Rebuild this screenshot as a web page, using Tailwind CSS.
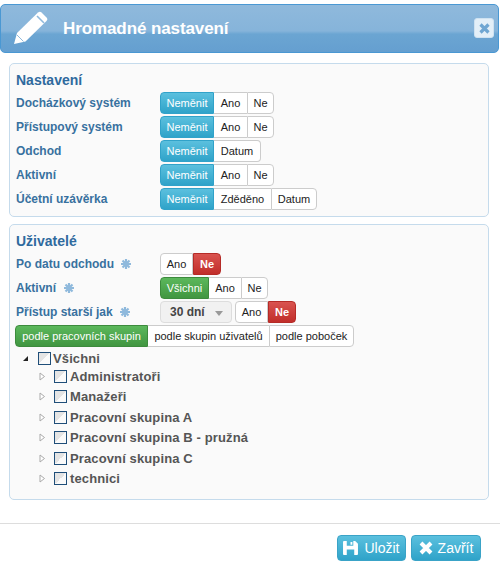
<!DOCTYPE html>
<html lang="en">
<head>
    <meta charset="UTF-8">
    <script src="https://cdn.jsdelivr.net/npm/@tailwindcss/browser@4"></script>
    <title>Hromadné nastavení</title>
</head>
<body class="bg-white font-['Liberation_Sans',Arial,sans-serif]">
<div class="w-[500px] h-[576px] overflow-hidden flex flex-col pt-[4px]">
    <!-- header -->
    <div class="relative h-[49px] w-[499px] shrink-0 flex items-center rounded-[5px] border border-[#4a98d3] bg-[linear-gradient(180deg,#8fb9dc_0%,#86b4da_55%,#6ba5d2_62%,#659fd0_100%)]">
        <svg class="absolute left-[12px] top-[6px]" width="36" height="34" viewBox="0 0 36 34"><path fill="#fff" d="M1 33 L4 22 L25 1.500 Q27 0 28.500 1.500 L34 7 Q35 8.500 33.500 10 L12.500 30.500 Z"/><path stroke="#8fb9dc" stroke-width="1.600" d="M24 5 L31 12"/><path stroke="#8fb9dc" stroke-width="1" d="M4 24 L10.500 30.500"/></svg>
        <h1 class="ml-[62px] text-[17px] font-bold tracking-[-0.1px] text-white leading-none">Hromadné nastavení</h1>
        <div class="absolute right-[4px] top-[13px] w-[20px] h-[20px] rounded-[3px] border border-[#cfe2f1] bg-[#e3eff8] flex items-center justify-center">
            <svg width="11" height="11" viewBox="0 0 11 11"><path stroke="#6fa6d2" stroke-width="3.200" d="M1.500 1.500 L9.500 9.500 M9.500 1.500 L1.500 9.500"/></svg>
        </div>
    </div>

    <div class="flex flex-col gap-[7px] pl-[9px] pt-[10px] w-[489px] shrink-0">
        <!-- Nastaveni -->
        <section class="h-[154px] rounded-[5px] border border-[#c5dbec] bg-[#fafafa] pl-[6px] pt-[7px]">
            <h2 class="text-[14px] font-bold leading-[18px] text-[#2f6a9e]">Nastavení</h2>
            <div class="mt-[3px] flex flex-col gap-[2px]">
                <div class="flex items-center h-[22px]">
                    <span class="w-[144px] text-[12px] font-bold text-[#38719f]">Docházkový systém</span>
                    <div class="flex text-[11px] h-[22px] leading-[20px]">
                        <span class="w-[54px] text-center rounded-l-[4px] text-white border border-[#31a2c9] bg-[linear-gradient(180deg,#5bc0de,#2fa3c9)]">Neměnit</span>
                        <span class="w-[33px] text-center text-[#222] border-y border-[#ccc] bg-white">Ano</span>
                        <span class="w-[27px] text-center rounded-r-[4px] text-[#222] border border-[#ccc] bg-white">Ne</span>
                    </div>
                </div>
                <div class="flex items-center h-[22px]">
                    <span class="w-[144px] text-[12px] font-bold text-[#38719f]">Přístupový systém</span>
                    <div class="flex text-[11px] h-[22px] leading-[20px]">
                        <span class="w-[54px] text-center rounded-l-[4px] text-white border border-[#31a2c9] bg-[linear-gradient(180deg,#5bc0de,#2fa3c9)]">Neměnit</span>
                        <span class="w-[33px] text-center text-[#222] border-y border-[#ccc] bg-white">Ano</span>
                        <span class="w-[27px] text-center rounded-r-[4px] text-[#222] border border-[#ccc] bg-white">Ne</span>
                    </div>
                </div>
                <div class="flex items-center h-[22px]">
                    <span class="w-[144px] text-[12px] font-bold text-[#38719f]">Odchod</span>
                    <div class="flex text-[11px] h-[22px] leading-[20px]">
                        <span class="w-[54px] text-center rounded-l-[4px] text-white border border-[#31a2c9] bg-[linear-gradient(180deg,#5bc0de,#2fa3c9)]">Neměnit</span>
                        <span class="w-[47px] text-center rounded-r-[4px] text-[#222] border border-l-0 border-[#ccc] bg-white">Datum</span>
                    </div>
                </div>
                <div class="flex items-center h-[22px]">
                    <span class="w-[144px] text-[12px] font-bold text-[#38719f]">Aktivní</span>
                    <div class="flex text-[11px] h-[22px] leading-[20px]">
                        <span class="w-[54px] text-center rounded-l-[4px] text-white border border-[#31a2c9] bg-[linear-gradient(180deg,#5bc0de,#2fa3c9)]">Neměnit</span>
                        <span class="w-[33px] text-center text-[#222] border-y border-[#ccc] bg-white">Ano</span>
                        <span class="w-[27px] text-center rounded-r-[4px] text-[#222] border border-[#ccc] bg-white">Ne</span>
                    </div>
                </div>
                <div class="flex items-center h-[22px]">
                    <span class="w-[144px] text-[12px] font-bold text-[#38719f]">Účetní uzávěrka</span>
                    <div class="flex text-[11px] h-[22px] leading-[20px]">
                        <span class="w-[54px] text-center rounded-l-[4px] text-white border border-[#31a2c9] bg-[linear-gradient(180deg,#5bc0de,#2fa3c9)]">Neměnit</span>
                        <span class="w-[57px] text-center text-[#222] border-y border-[#ccc] bg-white">Zděděno</span>
                        <span class="w-[46px] text-center rounded-r-[4px] text-[#222] border border-[#ccc] bg-white">Datum</span>
                    </div>
                </div>
            </div>
        </section>

        <!-- Uzivatele -->
        <section class="h-[276px] rounded-[5px] border border-[#c5dbec] bg-[#fafafa] pl-[5px] pt-[7px]">
            <h2 class="ml-[1px] text-[14px] font-bold leading-[18px] text-[#2f6a9e]">Uživatelé</h2>
            <div class="mt-[3px] flex flex-col gap-[2px]">
                <div class="flex items-center h-[22px] pl-[1px]">
                    <span class="w-[144px] flex items-center text-[12px] font-bold text-[#38719f]">Po datu odchodu<svg class="ml-[7px]" width="10" height="10" viewBox="0 0 10 10"><path stroke="#8fb9dc" stroke-width="2.200" d="M5 0 V10 M0 5 H10 M1.500 1.500 L8.500 8.500 M8.500 1.500 L1.500 8.500"/></svg></span>
                    <div class="flex text-[11px] h-[22px] leading-[20px]">
                        <span class="w-[33px] text-center rounded-l-[4px] text-[#222] border border-[#ccc] bg-white">Ano</span>
                        <span class="w-[28px] text-center rounded-r-[4px] font-bold text-white border border-[#b52b27] bg-[linear-gradient(180deg,#d9534f,#c12e2a)]">Ne</span>
                    </div>
                </div>
                <div class="flex items-center h-[22px] pl-[1px]">
                    <span class="w-[144px] flex items-center text-[12px] font-bold text-[#38719f]">Aktivní<svg class="ml-[8px]" width="10" height="10" viewBox="0 0 10 10"><path stroke="#8fb9dc" stroke-width="2.200" d="M5 0 V10 M0 5 H10 M1.500 1.500 L8.500 8.500 M8.500 1.500 L1.500 8.500"/></svg></span>
                    <div class="flex text-[11px] h-[22px] leading-[20px]">
                        <span class="w-[49px] text-center rounded-l-[4px] text-white border border-[#3d8b3d] bg-[linear-gradient(180deg,#5cb85c,#419641)]">Všichni</span>
                        <span class="w-[32px] text-center text-[#222] border-y border-[#ccc] bg-white">Ano</span>
                        <span class="w-[27px] text-center rounded-r-[4px] text-[#222] border border-[#ccc] bg-white">Ne</span>
                    </div>
                </div>
                <div class="flex items-center h-[22px] pl-[1px]">
                    <span class="w-[144px] flex items-center text-[12px] font-bold text-[#38719f]">Přístup starší jak<svg class="ml-[7px]" width="10" height="10" viewBox="0 0 10 10"><path stroke="#8fb9dc" stroke-width="2.200" d="M5 0 V10 M0 5 H10 M1.500 1.500 L8.500 8.500 M8.500 1.500 L1.500 8.500"/></svg></span>
                    <div class="flex items-center justify-between w-[72px] h-[22px] pl-[9px] pr-[8px] rounded-[4px] border border-[#ddd] bg-[#f1f1f1] text-[12px] font-bold text-[#444]">30 dní<span class="w-0 h-0 border-x-[4px] border-x-transparent border-t-[5px] border-t-[#999] mt-[2px]"></span></div>
                    <div class="ml-[3px] flex text-[11px] h-[22px] leading-[20px]">
                        <span class="w-[33px] text-center rounded-l-[4px] text-[#222] border border-[#ccc] bg-white">Ano</span>
                        <span class="w-[28px] text-center rounded-r-[4px] font-bold text-white border border-[#b52b27] bg-[linear-gradient(180deg,#d9534f,#c12e2a)]">Ne</span>
                    </div>
                </div>
                <div class="flex text-[11px] h-[22px] leading-[20px]">
                    <span class="w-[133px] text-center rounded-l-[4px] text-white border border-[#3d8b3d] bg-[linear-gradient(180deg,#5cb85c,#419641)]">podle pracovních skupin</span>
                    <span class="w-[121px] text-center text-[#222] border-y border-[#ccc] bg-white">podle skupin uživatelů</span>
                    <span class="w-[85px] text-center rounded-r-[4px] text-[#222] border border-[#ccc] bg-white">podle poboček</span>
                </div>
            </div>
            <!-- tree -->
            <ul class="mt-[4px] text-[13px] font-bold tracking-[0.12px] text-[#555]">
                <li class="flex items-center h-[15px]">
                    <svg class="ml-[7px]" width="7" height="7" viewBox="0 0 7 7"><path fill="#222" d="M6 1 V6 H1 Z"/></svg>
                    <span class="ml-[9px] w-[13px] h-[13px] border border-[#1f4e79] bg-[linear-gradient(135deg,#e4e4e4_50%,#fafafa_50%)]"></span>
                    <span class="ml-[2px]">Všichni</span>
                </li>
                <li class="flex items-center h-[20.500px] pl-[24px]">
                    <svg width="7" height="9" viewBox="0 0 7 9"><path fill="#fff" stroke="#aaa" d="M1 1 L5.500 4.500 L1 8 Z"/></svg>
                    <span class="ml-[8px] w-[13px] h-[13px] border border-[#1f4e79] bg-[linear-gradient(135deg,#e4e4e4_50%,#fafafa_50%)]"></span>
                    <span class="ml-[3px]">Administratoři</span>
                </li>
                <li class="flex items-center h-[20.500px] pl-[24px]">
                    <svg width="7" height="9" viewBox="0 0 7 9"><path fill="#fff" stroke="#aaa" d="M1 1 L5.500 4.500 L1 8 Z"/></svg>
                    <span class="ml-[8px] w-[13px] h-[13px] border border-[#1f4e79] bg-[linear-gradient(135deg,#e4e4e4_50%,#fafafa_50%)]"></span>
                    <span class="ml-[3px]">Manažeři</span>
                </li>
                <li class="flex items-center h-[20.500px] pl-[24px]">
                    <svg width="7" height="9" viewBox="0 0 7 9"><path fill="#fff" stroke="#aaa" d="M1 1 L5.500 4.500 L1 8 Z"/></svg>
                    <span class="ml-[8px] w-[13px] h-[13px] border border-[#1f4e79] bg-[linear-gradient(135deg,#e4e4e4_50%,#fafafa_50%)]"></span>
                    <span class="ml-[3px]">Pracovní skupina A</span>
                </li>
                <li class="flex items-center h-[20.500px] pl-[24px]">
                    <svg width="7" height="9" viewBox="0 0 7 9"><path fill="#fff" stroke="#aaa" d="M1 1 L5.500 4.500 L1 8 Z"/></svg>
                    <span class="ml-[8px] w-[13px] h-[13px] border border-[#1f4e79] bg-[linear-gradient(135deg,#e4e4e4_50%,#fafafa_50%)]"></span>
                    <span class="ml-[3px]">Pracovní skupina B - pružná</span>
                </li>
                <li class="flex items-center h-[20.500px] pl-[24px]">
                    <svg width="7" height="9" viewBox="0 0 7 9"><path fill="#fff" stroke="#aaa" d="M1 1 L5.500 4.500 L1 8 Z"/></svg>
                    <span class="ml-[8px] w-[13px] h-[13px] border border-[#1f4e79] bg-[linear-gradient(135deg,#e4e4e4_50%,#fafafa_50%)]"></span>
                    <span class="ml-[3px]">Pracovní skupina C</span>
                </li>
                <li class="flex items-center h-[20.500px] pl-[24px]">
                    <svg width="7" height="9" viewBox="0 0 7 9"><path fill="#fff" stroke="#aaa" d="M1 1 L5.500 4.500 L1 8 Z"/></svg>
                    <span class="ml-[8px] w-[13px] h-[13px] border border-[#1f4e79] bg-[linear-gradient(135deg,#e4e4e4_50%,#fafafa_50%)]"></span>
                    <span class="ml-[3px]">technici</span>
                </li>
            </ul>
        </section>
    </div>

    <!-- footer -->
    <div class="mt-[23px] border-t border-[#ddd] flex justify-end gap-[5px] pt-[11px] pr-[19px]">
        <button class="flex items-center justify-center gap-[6px] w-[69px] h-[26px] rounded-[4px] border border-[#3aa3c7] bg-[linear-gradient(180deg,#5bc0de,#2fa3c9)] text-[14px] text-white">
            <svg width="15" height="14" viewBox="0 0 16 15"><path fill="#fff" fill-rule="evenodd" d="M0 1 Q0 0 1 0 H13 L16 3 V14 Q16 15 15 15 H1 Q0 15 0 14 Z M4 0 V5 H11 V0 Z M8 1 V4 H10 V1 Z M4 9 V15 H12 V9 Z"/></svg>
            Uložit
        </button>
        <button class="flex items-center justify-center gap-[5px] w-[70px] h-[26px] rounded-[4px] border border-[#3aa3c7] bg-[linear-gradient(180deg,#5bc0de,#2fa3c9)] text-[14px] text-white">
            <svg width="14" height="14" viewBox="0 0 14 14"><path stroke="#fff" stroke-width="4" d="M2 2 L12 12 M12 2 L2 12"/></svg>
            Zavřít
        </button>
    </div>
</div>
</body>
</html>
